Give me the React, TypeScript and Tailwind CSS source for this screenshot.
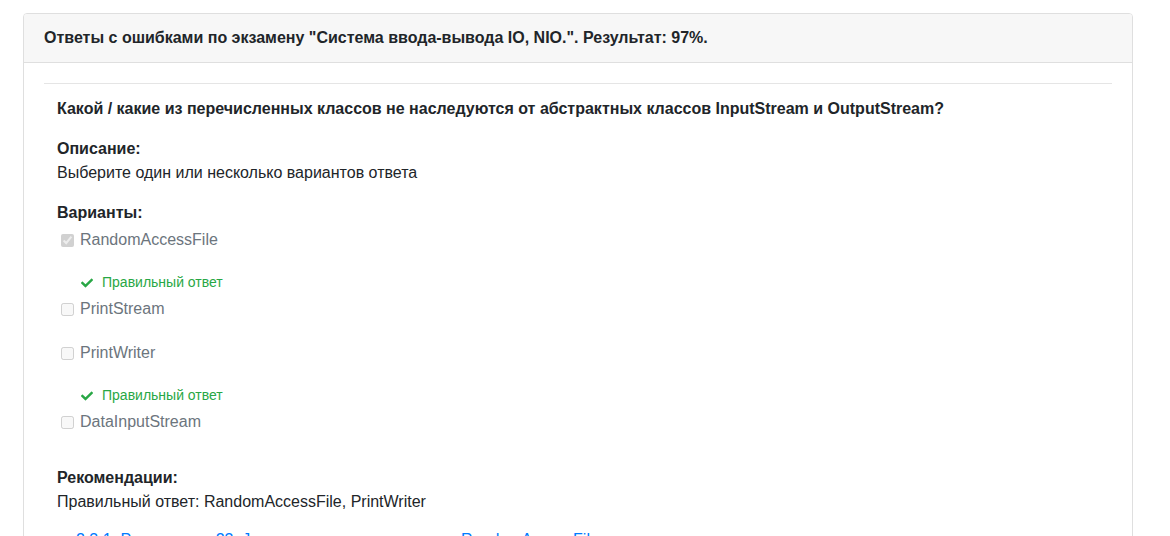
import React from "react";
import { FaCheck } from "react-icons/fa";

const options = [
  { label: "RandomAccessFile", checked: true, correct: true },
  { label: "PrintStream", checked: false, correct: false },
  { label: "PrintWriter", checked: false, correct: true },
  { label: "DataInputStream", checked: false, correct: false },
];

export default function App() {
  return (
    <div
      className="min-h-[536px] bg-white text-[16px] leading-[24px] text-[#212529]"
      style={{ fontFamily: '"Liberation Sans", Arial, sans-serif' }}
    >
      <div className="pt-[13px] pl-[23px]">
        <div className="w-[1110px] rounded-[4px] border border-[#dfdfdf] bg-white">
          <div className="rounded-t-[3px] border-b border-[#dfdfdf] bg-[#f7f7f7] px-5 py-3 font-bold">
            Ответы с ошибками по экзамену "Система ввода-вывода IO, NIO.". Результат: 97%.
          </div>
          <div className="px-5 pt-5">
            <div className="h-px bg-[#e5e5e5]" />
            <div className="px-[13px] pt-[13px]">
              <div className="font-bold">
                Какой / какие из перечисленных классов не наследуются от абстрактных классов InputStream и OutputStream?
              </div>
              <div className="mt-4 font-bold">Описание:</div>
              <div>Выберите один или несколько вариантов ответа</div>
              <div className="mt-4 font-bold">Варианты:</div>
              <div className="mt-[3px]">
                {options.map((o) => (
                  <div key={o.label}>
                    <div className="mb-5 flex h-6 items-center">
                      <input
                        type="checkbox"
                        disabled
                        checked={o.checked}
                        readOnly
                        className="m-0 ml-1 mr-[6px] h-[13px] w-[13px]"
                      />
                      <span className="text-[#6c757d]">{o.label}</span>
                    </div>
                    {o.correct && (
                      <div className="mb-1 flex h-[21px] items-center pl-6 text-[14px] leading-[21px] text-[#28a745]">
                        <FaCheck className="h-[12px] w-[12px]" />
                        <span className="ml-[9px]">Правильный ответ</span>
                      </div>
                    )}
                  </div>
                ))}
              </div>
              <div className="mt-8 font-bold">Рекомендации:</div>
              <div>Правильный ответ: RandomAccessFile, PrintWriter</div>
              <div className="mt-[14px] pl-[19px] text-[#007bff]">
                2.3.1. Рассмотрим 23. Java: ввод и вывод данных в RandomAccessFile
              </div>
            </div>
          </div>
        </div>
      </div>
    </div>
  );
}
